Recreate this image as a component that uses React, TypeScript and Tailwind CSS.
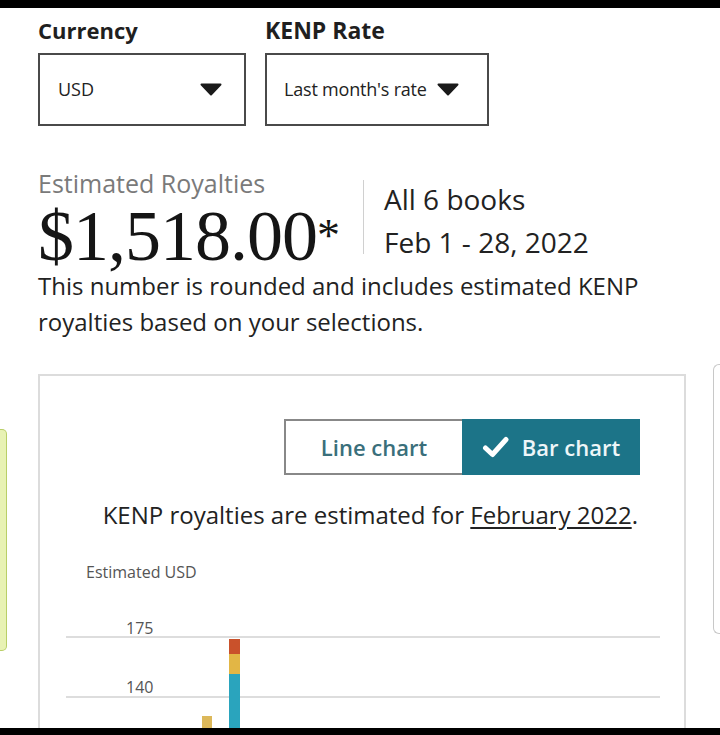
import React from "react";

const sans = "font-['Open_Sans',_'Liberation_Sans',_sans-serif]";
const svgFont = "Open Sans, Liberation Sans, sans-serif";

function Caret() {
  return (
    <svg width="22" height="13" viewBox="0 0 22 13" className="shrink-0">
      <path d="M1.5 1.5 H20.5 L11 11.5 Z" fill="#1a1a1a" stroke="#1a1a1a" strokeWidth="2" strokeLinejoin="round" />
    </svg>
  );
}

function Chart() {
  return (
    <svg width="644" height="170" viewBox="0 0 644 170" className="block">
      <text x="46" y="18" fontSize="16" fill="#555" fontFamily={svgFont}>Estimated USD</text>
      <text x="86" y="74" fontSize="16" fill="#555" fontFamily={svgFont}>175</text>
      <line x1="26" y1="77" x2="620" y2="77" stroke="#d2d2d2" strokeWidth="1.5" />
      <text x="86" y="133" fontSize="16" fill="#555" fontFamily={svgFont}>140</text>
      <line x1="26" y1="137" x2="620" y2="137" stroke="#d2d2d2" strokeWidth="1.5" />
      <rect x="189" y="79" width="11" height="15" fill="#c9512b" />
      <rect x="189" y="94" width="11" height="20" fill="#e2b645" />
      <rect x="189" y="114" width="11" height="56" fill="#2aa4bd" />
      <rect x="162" y="156" width="10" height="14" fill="#dcb85a" />
    </svg>
  );
}

export default function App() {
  return (
    <div className={`w-[720px] h-[735px] bg-white overflow-hidden ${sans}`}>
      <div className="h-[8px] bg-black" />
      <div className="h-[720px] overflow-hidden bg-white">
        <div className="px-[38px] pt-[5px]">
          <div className="flex gap-[19px]">
            <div className="w-[208px]">
              <div className="text-[22px] font-bold text-[#1f1f1f] leading-[34px]">Currency</div>
              <div className="mt-[6px] h-[73px] border-[2px] border-[#4a4a4a] flex items-center justify-between pl-[18px] pr-[22px]">
                <span className="text-[18px] text-[#222]">USD</span>
                <Caret />
              </div>
            </div>
            <div className="w-[224px]">
              <div className="text-[23px] font-bold text-[#1f1f1f] leading-[34px]">KENP Rate</div>
              <div className="mt-[6px] h-[73px] border-[2px] border-[#4a4a4a] flex items-center pl-[17px] gap-[10px]">
                <span className="text-[18px] text-[#222] tracking-[-0.2px]">Last month's rate</span>
                <Caret />
              </div>
            </div>
          </div>

          <div className="mt-[42px] flex items-start">
            <div>
              <div className="text-[25px] text-[#7a7a7a] leading-[30px]">Estimated Royalties</div>
              <div className="mt-[7px] font-['Liberation_Serif',_serif] text-[72px] leading-[62px] text-[#151515] tracking-[-1px] whitespace-nowrap">
                $1,518.00<span className="text-[46px] align-top relative top-[0px]">*</span>
              </div>
            </div>
            <div className="ml-[24px] mt-[12px] h-[74px] w-[1px] bg-[#d0d0d0]" />
            <div className="ml-[20px] mt-[10px] text-[28px] text-[#222] leading-[43px] whitespace-nowrap">
              <div>All 6 books</div>
              <div>Feb 1 - 28, 2022</div>
            </div>
          </div>

          <p className="mt-[1px] text-[24px] leading-[36px] text-[#222] whitespace-nowrap">
            This number is rounded and includes estimated KENP
            <br />
            royalties based on your selections.
          </p>
        </div>

        <div className="mt-[24px] flex items-start">
          <div className="mt-[65px] w-[7px] h-[222px] bg-[#e8f2b4] border-[1.5px] border-l-0 border-[#b9cf68] rounded-r-[5px]" />
          <div className="ml-[31px] w-[648px] h-[400px] mt-[10px] border-[2px] border-[#dcdcdc]">
            <div className="flex justify-end pr-[44px] pt-[43px]">
              <div className="flex h-[56px]">
                <div className="w-[178px] border-[2px] border-r-0 border-[#888] flex items-center justify-center text-[22px] font-semibold text-[#3a6f7b]">
                  Line chart
                </div>
                <div className="w-[178px] bg-[#1c7488] flex items-center justify-center gap-[12px] text-[22px] font-semibold text-[#eef6f8]">
                  <svg width="28" height="22" viewBox="0 0 28 22">
                    <path d="M3.5 12 L10.5 18.5 L24 3.5" fill="none" stroke="#fff" strokeWidth="5" strokeLinecap="round" strokeLinejoin="round" />
                  </svg>
                  Bar chart
                </div>
              </div>
            </div>
            <div className="mt-[25px] pr-[46px] text-right text-[24px] text-[#222] leading-[30px] whitespace-nowrap">
              KENP royalties are estimated for <span className="underline underline-offset-[3px]">February 2022</span>.
            </div>
            <div className="mt-[30px]">
              <Chart />
            </div>
          </div>
          <div className="ml-[27px] w-[7px] h-[270px] border-[1.5px] border-r-0 border-[#c8c8c8] rounded-l-[6px] bg-white" />
        </div>
      </div>
      <div className="h-[7px] bg-black" />
    </div>
  );
}
